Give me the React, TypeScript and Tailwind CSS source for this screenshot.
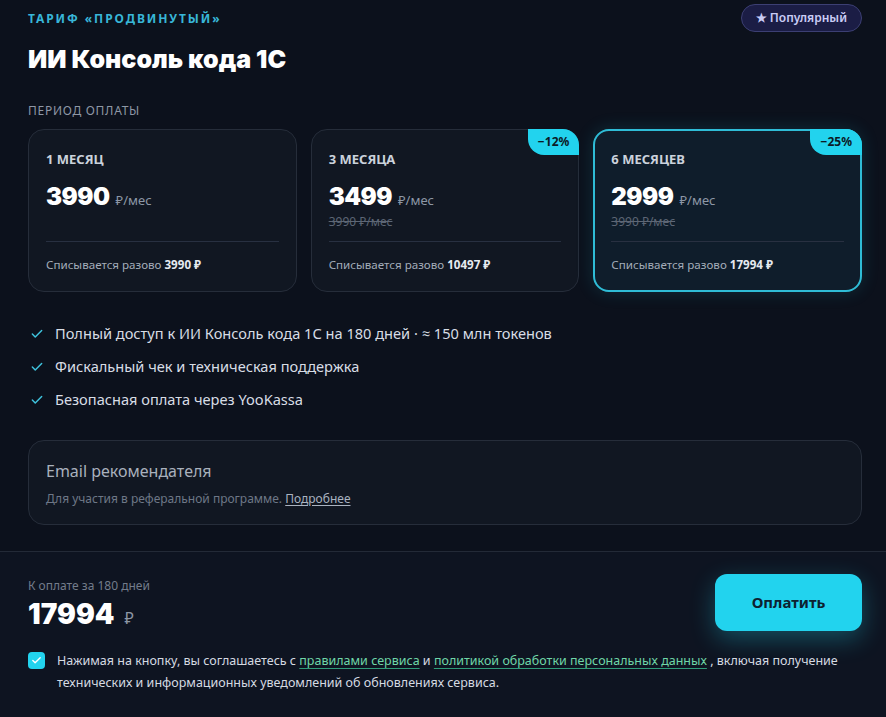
import { Check } from "lucide-react"

const periods = [
  { label: "1 МЕСЯЦ", price: "3990", old: null, total: "3990", discount: null, active: false },
  { label: "3 МЕСЯЦА", price: "3499", old: "3990 ₽/мес", total: "10497", discount: "−12%", active: false },
  { label: "6 МЕСЯЦЕВ", price: "2999", old: "3990 ₽/мес", total: "17994", discount: "−25%", active: true },
]

const features = [
  "Полный доступ к ИИ Консоль кода 1С на 180 дней · ≈ 150 млн токенов",
  "Фискальный чек и техническая поддержка",
  "Безопасная оплата через YooKassa",
]

const heavy = { fontFamily: "Inter, \"Noto Sans\", sans-serif" }

function PeriodCard({ p }: { p: (typeof periods)[number] }) {
  return (
    <div
      className={
        p.active
          ? "relative flex h-[163px] flex-col rounded-2xl border-2 border-[#2fbcd6] bg-[#0f1d2b] px-[16px] pt-[19px] shadow-[0_0_18px_rgba(34,211,238,0.15)]"
          : "relative flex h-[163px] flex-col rounded-2xl border border-[#262d3a] bg-[#111722] px-[17px] pt-[20px]"
      }
    >
      {p.discount && (
        <span
          className={
            p.active
              ? "absolute -right-[2px] -top-[2px] rounded-bl-2xl rounded-tr-2xl bg-[#22d3ee] px-[10px] py-[4px] text-[12px] font-bold text-[#0b1a26]"
              : "absolute -right-[1px] -top-[1px] rounded-bl-2xl rounded-tr-2xl bg-[#22d3ee] px-[10px] py-[4px] text-[12px] font-bold text-[#0b1a26]"
          }
        >
          {p.discount}
        </span>
      )}
      <div className="text-[13px] font-bold leading-[18px] text-[#cbd2dc]">{p.label}</div>
      <div className="mt-[14px] flex items-baseline gap-[6px]">
        <span className="text-[24px] font-black leading-[30px] tracking-[-0.02em] text-white" style={heavy}>
          {p.price}
        </span>
        <span className="text-[13px] text-[#8d97a6]">₽/мес</span>
      </div>
      <div className="mt-[1px] h-[18px] text-[12px] leading-[18px] text-[#5d6675] line-through">{p.old}</div>
      <div className="mt-[10px] border-t border-[#283041]" />
      <div className="mt-[14px] text-[11.6px] text-[#a3acb9]">
        Списывается разово <span className="font-bold text-[#e6eaf0]">{p.total} ₽</span>
      </div>
    </div>
  )
}

export default function App() {
  return (
    <div
      className="min-h-[717px] w-[886px] bg-[#0c111c] text-white"
      style={{ fontFamily: '"Noto Sans", "Open Sans", sans-serif' }}
    >
      <div className="pl-[28px] pr-[24px] pt-[9px]">
        <div className="flex items-start justify-between">
          <div className="pt-[1px] text-[12px] font-bold tracking-[0.16em] text-[#38b6d8]">ТАРИФ «ПРОДВИНУТЫЙ»</div>
          <span className="-mt-[5px] rounded-full border border-[#3c3f73] bg-[#1b1d45] px-[14px] py-[4px] text-[12px] font-semibold text-[#c9ccf5]">
            ★ Популярный
          </span>
        </div>
        <h1 className="mt-[10px] text-[25px] font-black leading-[34px] text-white" style={heavy}>
          ИИ Консоль кода 1С
        </h1>
        <div className="mt-[26px] text-[12px] tracking-[0.06em] text-[#8e97a5]">ПЕРИОД ОПЛАТЫ</div>

        <div className="mt-[9px] grid grid-cols-3 gap-[14px]">
          {periods.map((p) => (
            <PeriodCard key={p.label} p={p} />
          ))}
        </div>

        <ul className="mt-[31px] flex flex-col gap-[12px]">
          {features.map((f) => (
            <li key={f} className="flex items-center gap-[11px] text-[14.6px] leading-[21px] text-[#d8dde5]">
              <Check className="ml-[2px] h-[14px] w-[14px] text-[#3fc3dd]" strokeWidth={2.5} />
              {f}
            </li>
          ))}
        </ul>

        <div className="mt-[30px] h-[85px] rounded-2xl border border-[#262d3a] bg-[#111722] px-[17px] pt-[19px]">
          <div className="text-[16px] leading-[22px] text-[#a9b1bd]">Email рекомендателя</div>
          <div className="mt-[8px] text-[12px] text-[#6e7787]">
            Для участия в реферальной программе.{" "}
            <span className="text-[#aab3c0] underline underline-offset-2">Подробнее</span>
          </div>
        </div>
      </div>

      <div className="mt-[26px] border-t border-[#232a37] bg-[#0e1421] pb-[26px] pl-[28px] pr-[24px] pt-[22px]">
        <div className="flex items-start justify-between">
          <div className="pt-[3px]">
            <div className="text-[12px] text-[#737c8b]">К оплате за 180 дней</div>
            <div className="mt-[1px] flex items-baseline gap-[10px]">
              <span className="text-[28px] font-black leading-[36px] text-white" style={heavy}>
                17994
              </span>
              <span className="text-[16px] text-[#8d97a6]">₽</span>
            </div>
          </div>
          <button className="h-[57px] w-[147px] rounded-xl bg-[#22d3ee] text-[15px] font-bold text-[#0d2130] shadow-[0_8px_24px_rgba(34,211,238,0.3)]">
            Оплатить
          </button>
        </div>
        <div className="mt-[18px] flex items-start gap-[12px]">
          <span className="mt-[2px] flex h-[17px] w-[17px] shrink-0 items-center justify-center rounded-[4px] bg-[#22d3ee]">
            <Check className="h-[11px] w-[11px] text-white" strokeWidth={3} />
          </span>
          <p className="text-[12.5px] leading-[22px] text-[#d5dae2]">
            Нажимая на кнопку, вы соглашаетесь с{" "}
            <span className="text-[#6fd6a8] underline decoration-[#2f9c79] underline-offset-3">правилами сервиса</span> и{" "}
            <span className="text-[#6fd6a8] underline decoration-[#2f9c79] underline-offset-3">
              политикой обработки персональных данных
            </span>{" "}
            , включая получение технических и информационных уведомлений об обновлениях сервиса.
          </p>
        </div>
      </div>
    </div>
  )
}
